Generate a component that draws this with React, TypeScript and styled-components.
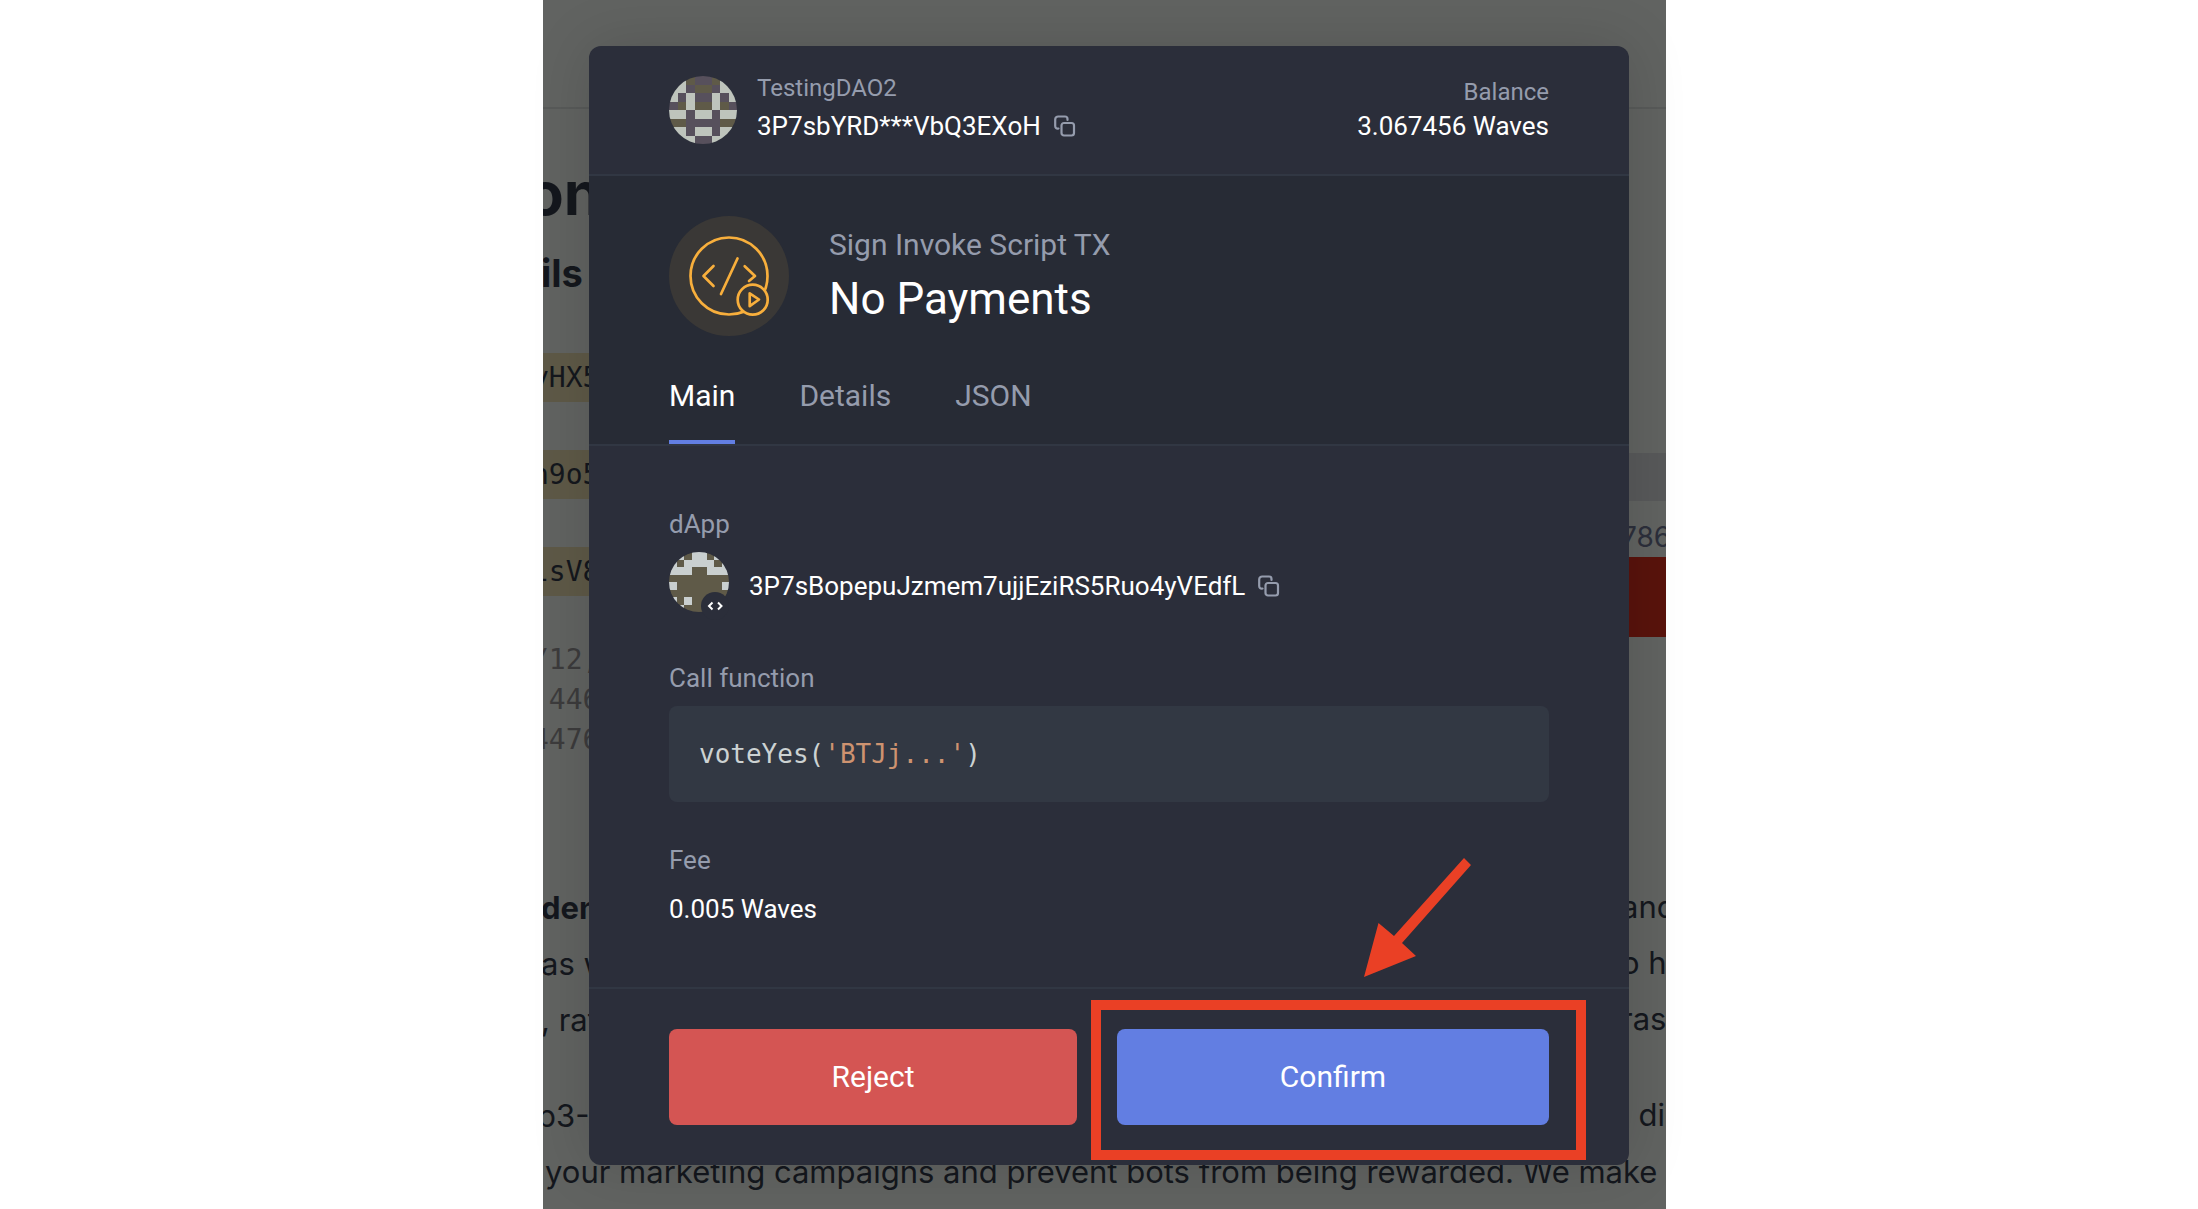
import React, { useState } from "react";
import styled, { createGlobalStyle } from "styled-components";

const c = {
  panel: "#2b2e3a",
  hero: "#272b35",
  line: "#313743",
  field: "#323843",
  muted: "#959cad",
  white: "#ffffff",
  amber: "#f8af3c",
  blue: "#627ee2",
  red: "#d45553",
  mark: "#ea4025",
  ink: "#14171d",
};

const sans = `Roboto, "Liberation Sans", sans-serif`;
const mono = `"DejaVu Sans Mono", "Liberation Mono", monospace`;

const GlobalStyle = createGlobalStyle`
  *, *::before, *::after { box-sizing: border-box; }
  html, body { margin: 0; padding: 0; background: #fff; }
  body { font-family: ${sans}; -webkit-font-smoothing: antialiased; }
  h1, h2, h3, p, dl, dt, dd { margin: 0; font-weight: 400; }
  button { font: inherit; border: 0; padding: 0; background: none; cursor: pointer; }
`;

const Screen = styled.div`
  display: grid;
  grid-template-columns: 543fr 1123fr 532fr;
  height: 100vh;
  overflow: hidden;
`;

/* Page behind the wallet window */

const Backdrop = styled.div`
  grid-column: 2;
  grid-row: 1;
  overflow: hidden;
  background: #616361;
  color: ${c.ink};
  font-family: Inter, "Liberation Sans", sans-serif;
`;

const SiteHeader = styled.div`
  height: 109px;
  border-bottom: 2px solid #585a59;
`;

const SiteBody = styled.div`
  display: flex;
  justify-content: space-between;
`;

const LeftSide = styled.div`
  width: 80px;
  white-space: pre;
`;

const RightSide = styled.div`
  width: 45px;
  padding-top: 344px;
  white-space: pre;
`;

const PageTitle = styled.h1`
  margin: 52px 0 0 -16px;
  font-size: 60px;
  line-height: 64px;
  font-weight: 700;
`;

const PageSubtitle = styled.h2`
  margin: 26px 0 0 -2px;
  font-size: 38px;
  line-height: 44px;
  font-weight: 700;
`;

const HashList = styled.div`
  display: grid;
  gap: 48px;
  padding-top: 58px;
  font: 28px/49px ${mono};
`;

const Hash = styled.div`
  padding-right: 8px;
  text-indent: -11px;
  background: #5e5947;
`;

const Stats = styled.div`
  padding-top: 44px;
  font: 28px/40px ${mono};
  text-indent: -11px;
  color: #3c3b3c;
`;

const Copy = styled.div<{ $top: number }>`
  padding-top: ${(p) => p.$top}px;
  font-size: 31px;
  line-height: 56px;
`;

const CopyLine = styled.p<{ $bleed?: number }>`
  text-indent: ${(p) => -(p.$bleed ?? 0)}px;
`;

const GreyBand = styled.div`
  height: 48px;
  background: #58595a;
`;

const Amount = styled.p`
  padding-top: 16px;
  font-size: 28px;
  line-height: 40px;
  color: #2c2f3b;
`;

const RedBand = styled.div`
  height: 80px;
  background: #59130c;
`;

/* Wallet window */

const Overlay = styled.div`
  grid-column: 2;
  grid-row: 1;
  z-index: 1;
  padding: 46px 37px 44px 46px;
`;

const Dialog = styled.main`
  display: flex;
  flex-direction: column;
  border-radius: 12px;
  background: ${c.panel};
  color: ${c.white};
  box-shadow: 0 0 60px rgba(0, 0, 0, 0.14);
`;

const AccountBar = styled.header`
  display: flex;
  justify-content: space-between;
  padding: 26px 80px 30px;
  border-bottom: 2px solid ${c.line};
`;

const Account = styled.div`
  display: flex;
  align-items: flex-end;
  gap: 20px;
`;

const AccountText = styled.div`
  display: grid;
  height: 72px;
  align-content: start;
`;

const BalanceText = styled(AccountText)`
  padding-top: 4px;
  text-align: right;
`;

const SmallLabel = styled.div`
  font-size: 24px;
  line-height: 32px;
  color: ${c.muted};
`;

const NameLabel = styled(SmallLabel)`
  padding-bottom: 4px;
`;

const Value = styled.div`
  display: flex;
  align-items: center;
  gap: 13px;
  font-size: 26px;
  line-height: 36px;
`;

const IconButton = styled.button`
  display: flex;
  color: ${c.muted};
`;

const Hero = styled.section`
  padding: 40px 80px 0;
  background: ${c.hero};
  border-bottom: 2px solid ${c.line};
`;

const HeroHead = styled.div`
  display: flex;
  align-items: center;
  gap: 40px;
`;

const HeroText = styled.div`
  padding-top: 2px;
`;

const HeroKind = styled.p`
  font-size: 30px;
  line-height: 44px;
  color: ${c.muted};
`;

const HeroTitle = styled.h1`
  font-size: 44px;
  line-height: 64px;
`;

const Tabs = styled.nav`
  display: flex;
  gap: 64px;
  padding-top: 36px;
`;

const Tab = styled.button<{ $active: boolean }>`
  height: 72px;
  padding-bottom: 20px;
  border-bottom: 4px solid ${(p) => (p.$active ? c.blue : "transparent")};
  font-size: 30px;
  line-height: 44px;
  color: ${(p) => (p.$active ? c.white : c.muted)};
`;

const Details = styled.dl`
  padding: 60px 80px 60px;
`;

const Term = styled.dt`
  font-size: 26px;
  line-height: 36px;
  color: ${c.muted};
`;

const DappRow = styled.dd`
  display: flex;
  align-items: center;
  gap: 20px;
  padding: 10px 0 48px;
`;

const DappAddress = styled(Value)`
  padding-top: 8px;
`;

const CodeRow = styled.dd`
  padding: 10px 0 40px;
`;

const Code = styled.code`
  display: block;
  padding: 0 30px;
  border-radius: 8px;
  background: ${c.field};
  font: 26px/96px ${mono};
  color: #ccd2d2;
`;

const CodeString = styled.span`
  color: #ce9370;
`;

const FeeRow = styled.dd`
  padding-top: 13px;
`;

const Actions = styled.footer`
  display: grid;
  grid-template-columns: 408fr 432fr;
  gap: 40px;
  padding: 40px 80px;
  border-top: 2px solid ${c.line};
`;

const ConfirmSlot = styled.div`
  position: relative;
  display: grid;
`;

const ActionButton = styled.button<{ $tone: string }>`
  height: 96px;
  padding-bottom: 2px;
  border-radius: 8px;
  background: ${(p) => p.$tone};
  color: ${c.white};
  font-size: 30px;
`;

const Highlight = styled.div`
  position: absolute;
  inset: -29px -37px -35px -26px;
  border: 10px solid ${c.mark};
  pointer-events: none;
`;

const Arrow = styled.svg`
  position: absolute;
  left: 247px;
  top: -171px;
  pointer-events: none;
`;

/* Each row lists the left half of a symmetric 8×8 mosaic. */
const accountMosaic = ["LLOP", "LLPO", "LPLP", "POLO", "LLPL", "OOPP", "LLPL", "LLLP"];
const dappMosaic = ["LLOL", "LOLL", "LLLO", "OOOO", "LOOO", "OOOO", "LOLO", "LLOO"];

function Mosaic({ id, rows, size, light, children }: {
  id: string; rows: string[]; size: number; light: string; children?: React.ReactNode;
}) {
  const tones: Record<string, string> = { L: light, O: "#5f5a48", P: "#57505c" };
  return (
    <svg width={size} height={size} viewBox={`0 0 ${size} ${size}`} overflow="visible" aria-hidden="true">
      <clipPath id={id}>
        <circle cx={size / 2} cy={size / 2} r={size / 2} />
      </clipPath>
      <g clipPath={`url(#${id})`}>
        <g transform={`scale(${size / 8})`} shapeRendering="crispEdges">
          {rows.map((row, y) =>
            [...row, ...[...row].reverse()].map((t, x) => (
              <rect key={`${x}-${y}`} x={x} y={y} width="1" height="1" fill={tones[t]} />
            ))
          )}
        </g>
      </g>
      {children}
    </svg>
  );
}

function CopyIcon() {
  return (
    <svg width="22" height="22" viewBox="0 0 22 22" fill="none" stroke="currentColor" strokeWidth="2.2" aria-hidden="true">
      <rect x="7.5" y="8" width="12.5" height="12.5" rx="2.5" />
      <path d="M4.5 13.5C2.5 14 1.2 13 1.2 11V4.500a3 3 0 0 1 3-3H11a2.500 2.500 0 0 1 2.500 2.500v1" strokeLinecap="round" />
    </svg>
  );
}

function InvokeIcon() {
  return (
    <svg width="120" height="120" viewBox="0 0 120 120" fill="none" stroke={c.amber} strokeWidth="2.7"
      strokeLinecap="round" strokeLinejoin="round" aria-hidden="true">
      <circle cx="60" cy="60" r="60" fill="#3a3836" stroke="none" />
      <circle cx="60" cy="60" r="38.5" />
      <path d="M44.5 50 34.5 60l10 10M68.5 42.5 52 78M75.7 50.3 86 60l-6 5" />
      <circle cx="83.7" cy="83.7" r="15" fill="#3a3836" />
      <path d="M80.7 77.3v12.9l9.3-6.7z" />
    </svg>
  );
}

const tabs = ["Main", "Details", "JSON"];

export default function App() {
  const [tab, setTab] = useState("Main");
  return (
    <>
      <GlobalStyle />
      <Screen>
        <Backdrop>
          <SiteHeader />
          <SiteBody>
            <LeftSide>
              <PageTitle>on</PageTitle>
              <PageSubtitle>ils</PageSubtitle>
              <HashList>
                <Hash>yHX5</Hash>
                <Hash>n9o5</Hash>
                <Hash>lsV8</Hash>
              </HashList>
              <Stats>
                <div>/12,</div>
                <div> 446</div>
                <div>4476</div>
              </Stats>
              <Copy $top={120}>
                <CopyLine $bleed={2}><b>den</b></CopyLine>
                <CopyLine $bleed={2}>as w</CopyLine>
                <CopyLine $bleed={2}>, rat</CopyLine>
              </Copy>
              <Copy $top={40}>
                <CopyLine $bleed={6}>b3-</CopyLine>
                <CopyLine $bleed={-2}>your marketing campaigns and prevent bots from being rewarded. We make</CopyLine>
              </Copy>
            </LeftSide>
            <RightSide>
              <GreyBand />
              <Amount>7867</Amount>
              <RedBand />
              <Copy $top={242}>
                <CopyLine>and</CopyLine>
                <CopyLine>o h</CopyLine>
                <CopyLine>ras</CopyLine>
              </Copy>
              <Copy $top={40}>
                <CopyLine>{"  di"}</CopyLine>
              </Copy>
            </RightSide>
          </SiteBody>
        </Backdrop>

        <Overlay>
          <Dialog>
            <AccountBar>
              <Account>
                <Mosaic id="account" rows={accountMosaic} size={68} light="#bec4bc" />
                <AccountText>
                  <NameLabel>TestingDAO2</NameLabel>
                  <Value>
                    3P7sbYRD***VbQ3EXoH
                    <IconButton type="button" aria-label="Copy account address"><CopyIcon /></IconButton>
                  </Value>
                </AccountText>
              </Account>
              <BalanceText>
                <SmallLabel>Balance</SmallLabel>
                <Value>3.067456 Waves</Value>
              </BalanceText>
            </AccountBar>

            <Hero>
              <HeroHead>
                <InvokeIcon />
                <HeroText>
                  <HeroKind>Sign Invoke Script TX</HeroKind>
                  <HeroTitle>No Payments</HeroTitle>
                </HeroText>
              </HeroHead>
              <Tabs>
                {tabs.map((t) => (
                  <Tab key={t} type="button" $active={t === tab} onClick={() => setTab(t)}>{t}</Tab>
                ))}
              </Tabs>
            </Hero>

            <Details>
              <Term>dApp</Term>
              <DappRow>
                <Mosaic id="dapp" rows={dappMosaic} size={60} light="#c9cfcf">
                  <circle cx="46" cy="54" r="14" fill={c.panel} />
                  <path d="m43.5 50.5-3.5 3.5 3.5 3.5M49 50.5l3.5 3.5-3.5 3.5" fill="none" stroke="#fff" strokeWidth="2" />
                </Mosaic>
                <DappAddress>
                  3P7sBopepuJzmem7ujjEziRS5Ruo4yVEdfL
                  <IconButton type="button" aria-label="Copy dApp address"><CopyIcon /></IconButton>
                </DappAddress>
              </DappRow>
              <Term>Call function</Term>
              <CodeRow>
                <Code>voteYes(<CodeString>'BTJj...'</CodeString>)</Code>
              </CodeRow>
              <Term>Fee</Term>
              <FeeRow>
                <Value>0.005 Waves</Value>
              </FeeRow>
            </Details>

            <Actions>
              <ActionButton type="button" $tone={c.red}>Reject</ActionButton>
              <ConfirmSlot>
                <ActionButton type="button" $tone={c.blue}>Confirm</ActionButton>
                <Highlight />
                <Arrow width="108" height="120" viewBox="0 0 108 120" fill={c.mark} aria-hidden="true">
                  <path d="M100 0l7 7-69 78 14 13L0 119l14.5-54L30 78z" />
                </Arrow>
              </ConfirmSlot>
            </Actions>
          </Dialog>
        </Overlay>
      </Screen>
    </>
  );
}
